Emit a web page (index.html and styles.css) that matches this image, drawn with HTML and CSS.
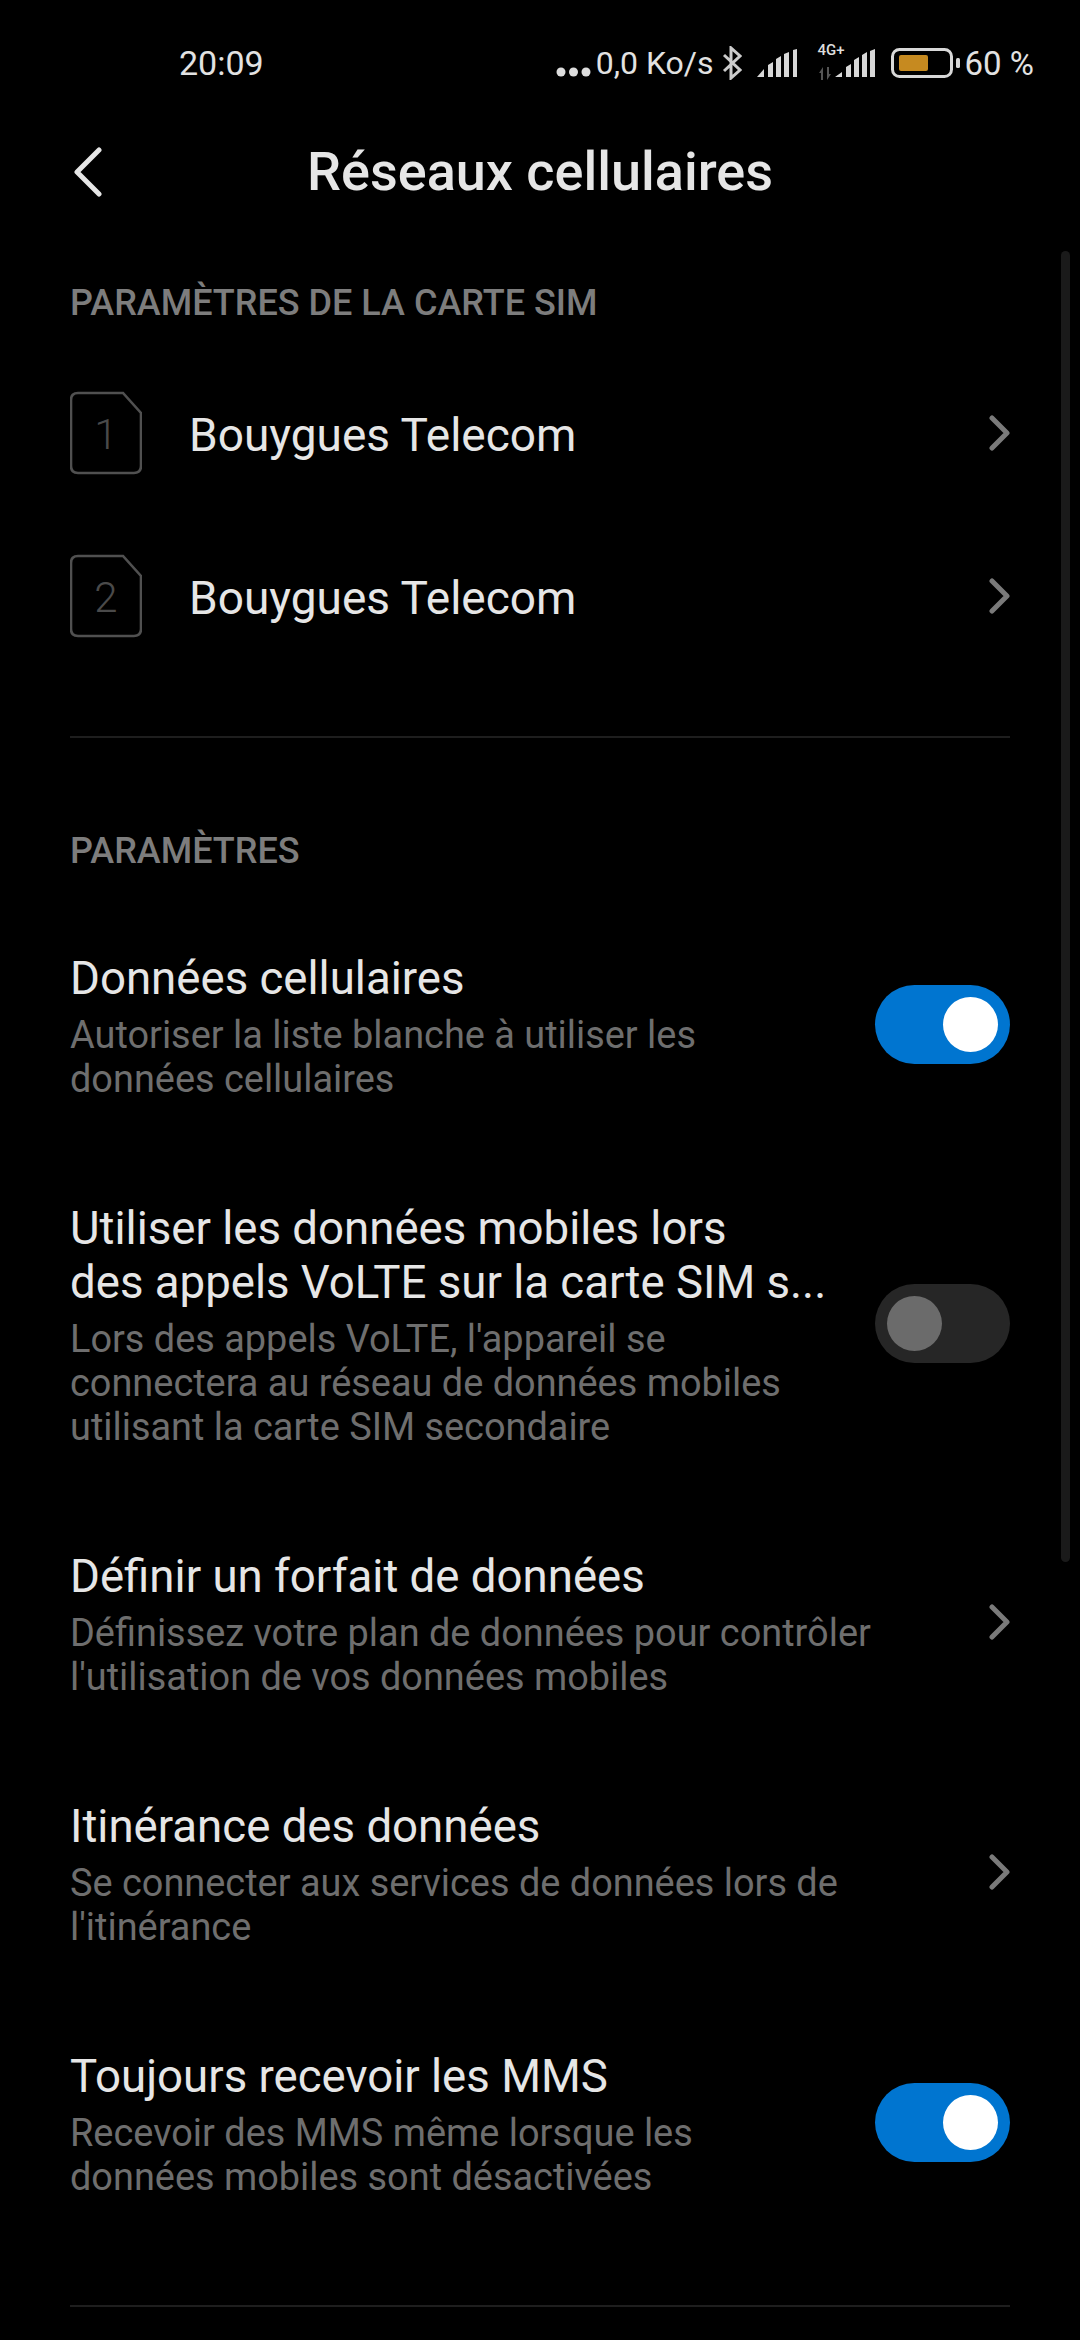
FILE: index.html
```html
<!doctype html>
<html lang="fr">
<head>
	<meta charset="UTF-8">
	<title>Réseaux cellulaires</title>
	<link rel="stylesheet" href="styles.css">
</head>
<body>
<div class="screen">
	<div class="status">
		<span class="time">20:09</span>
		<div class="status_right">
			<svg class="dots" width="35" height="10" viewBox="0 0 35 10"><circle cx="5" cy="5" r="4.5"/><circle cx="17.5" cy="5" r="4.5"/><circle cx="30" cy="5" r="4.5"/></svg>
			<span class="speed">0,0 Ko/s</span>
			<svg class="bt" width="20" height="34" viewBox="0 0 20 34"><path d="M2 9 L18 24 L9 32 L9 2 L18 10 L2 25" fill="none" stroke="#ccc" stroke-width="3"/></svg>
			<svg class="sig" width="40" height="29" viewBox="0 0 40 29"><path d="M0 28 L7 20 V28 Z M11 28 V16 L16 13 V28 Z M19 28 V10 L24 7 V28 Z M27 28 V5 L32 3 V28 Z M36 28 V1 L40 0 V28 Z" fill="#d8d8d8"/></svg>
			<div class="lte">
				<span class="lte_txt">4G+</span>
				<svg class="arrows" width="14" height="13" viewBox="0 0 14 13"><path d="M1 6 L5 0 V13 H3 V6 Z M9 0 H11 V7 H13 L9 13 Z" fill="#555"/></svg>
			</div>
			<svg class="sig2" width="40" height="29" viewBox="0 0 40 29"><path d="M0 28 L7 23 V28 Z M11 28 V18 L16 15 V28 Z M19 28 V11 L24 8 V28 Z M27 28 V6 L32 3 V28 Z M35 28 V2 L40 0 V28 Z" fill="#d8d8d8"/></svg>
			<svg class="batt" width="69" height="30" viewBox="0 0 69 30">
				<rect x="1.5" y="1.5" width="59" height="27" rx="7" fill="none" stroke="#d8d8d8" stroke-width="3"/>
				<rect x="8" y="7" width="29" height="16" rx="2" fill="#c68a20"/>
				<rect x="65" y="10" width="4" height="10" rx="1.5" fill="#d8d8d8"/>
			</svg>
			<span class="pct">60 %</span>
		</div>
	</div>

	<div class="head">
		<svg class="back" width="30" height="50" viewBox="0 0 30 50"><path d="M26 3 L4 25 L26 47" fill="none" stroke="#e6e6e6" stroke-width="5" stroke-linecap="round" stroke-linejoin="round"/></svg>
		<h1>Réseaux cellulaires</h1>
	</div>

	<h2 class="sec sec_first">PARAMÈTRES DE LA CARTE SIM</h2>
	<div class="sims">
		<div class="sim_row">
			<svg class="sim" width="72" height="84" viewBox="0 0 72 84"><path d="M8 2 H53 L71 22 V75 Q71 82 64 82 H8 Q1 82 1 75 V9 Q1 2 8 2 Z" fill="none" stroke="#505050" stroke-width="2.6"/><text x="36" y="58" text-anchor="middle" class="sim_num">1</text></svg>
			<span class="sim_name">Bouygues Telecom</span>
			<svg class="chev" width="22" height="36" viewBox="0 0 22 36"><path d="M4 3 L19 18 L4 33" fill="none" stroke="#7a7a7a" stroke-width="5" stroke-linecap="round" stroke-linejoin="round"/></svg>
		</div>
		<div class="sim_row">
			<svg class="sim" width="72" height="84" viewBox="0 0 72 84"><path d="M8 2 H53 L71 22 V75 Q71 82 64 82 H8 Q1 82 1 75 V9 Q1 2 8 2 Z" fill="none" stroke="#505050" stroke-width="2.6"/><text x="36" y="58" text-anchor="middle" class="sim_num">2</text></svg>
			<span class="sim_name">Bouygues Telecom</span>
			<svg class="chev" width="22" height="36" viewBox="0 0 22 36"><path d="M4 3 L19 18 L4 33" fill="none" stroke="#7a7a7a" stroke-width="5" stroke-linecap="round" stroke-linejoin="round"/></svg>
		</div>
	</div>

	<div class="line line_one"></div>

	<h2 class="sec sec_two">PARAMÈTRES</h2>

	<div class="list">
		<div class="item">
			<div class="txt">
				<div class="tt">Données cellulaires</div>
				<div class="sub">Autoriser la liste blanche à utiliser les<br>données cellulaires</div>
			</div>
			<div class="sw on"><i></i></div>
		</div>
		<div class="item">
			<div class="txt">
				<div class="tt">Utiliser les données mobiles lors<br>des appels VoLTE sur la carte SIM s...</div>
				<div class="sub">Lors des appels VoLTE, l'appareil se<br>connectera au réseau de données mobiles<br>utilisant la carte SIM secondaire</div>
			</div>
			<div class="sw"><i></i></div>
		</div>
		<div class="item">
			<div class="txt">
				<div class="tt">Définir un forfait de données</div>
				<div class="sub">Définissez votre plan de données pour contrôler<br>l'utilisation de vos données mobiles</div>
			</div>
			<svg class="chev" width="22" height="36" viewBox="0 0 22 36"><path d="M4 3 L19 18 L4 33" fill="none" stroke="#7a7a7a" stroke-width="5" stroke-linecap="round" stroke-linejoin="round"/></svg>
		</div>
		<div class="item">
			<div class="txt">
				<div class="tt">Itinérance des données</div>
				<div class="sub">Se connecter aux services de données lors de<br>l'itinérance</div>
			</div>
			<svg class="chev" width="22" height="36" viewBox="0 0 22 36"><path d="M4 3 L19 18 L4 33" fill="none" stroke="#7a7a7a" stroke-width="5" stroke-linecap="round" stroke-linejoin="round"/></svg>
		</div>
		<div class="item">
			<div class="txt">
				<div class="tt">Toujours recevoir les MMS</div>
				<div class="sub">Recevoir des MMS même lorsque les<br>données mobiles sont désactivées</div>
			</div>
			<div class="sw on"><i></i></div>
		</div>
	</div>

	<div class="line line_two"></div>

	<div class="scroll"></div>
</div>
</body>
</html>
```

FILE: styles.css
```css
html,body{margin:0;padding:0;background:#000;}
.screen{position:relative;
	width:1080px;
	height:2340px;
	overflow:hidden;
	background:#000;
	font-family:Roboto,"Noto Sans",sans-serif;
	color:#e6e6e6;}

/* status bar */
.status{display:flex;
	align-items:center;
	justify-content:space-between;
	height:36px;
	padding:45px 46px 0 179px;
	font-size:33px;
	color:#e2e2e2;}
.time{font-size:34px;line-height:36px;}
.status_right{display:flex;align-items:center;}
.dots{fill:#ddd;margin-top:18px;}
.speed{margin-left:5px;font-size:32px;}
.bt{margin-left:8px;}
.sig{margin-left:15px;}
.lte{position:relative;width:17px;height:36px;margin-left:21px;}
.lte_txt{position:absolute;left:0;top:-4px;font-size:15px;font-weight:500;color:#ddd;white-space:nowrap;}
.arrows{position:absolute;left:0;top:22px;}
.batt{margin-left:16px;}
.pct{margin-left:5px;}

/* title */
.head{position:relative;
	display:flex;
	align-items:center;
	justify-content:center;
	height:72px;
	margin-top:55px;}
.head h1{margin:0;font-size:54px;font-weight:500;line-height:72px;color:#e6e6e6;white-space:nowrap;}
.back{position:absolute;left:73px;top:11px;}

.sec{margin:0 70px;
	font-size:36px;
	line-height:40px;
	font-weight:500;
	color:#7d7d7d;}
.sec_first{margin-top:75px;}
.sec_two{margin-top:93px;}

.sims{margin-top:28px;}
.sim_row{display:flex;align-items:center;height:163px;padding:0 70px;}
.sim{flex:none;}
.sim_num{font-family:Roboto,sans-serif;font-size:42px;font-weight:300;fill:#4a4a4a;}
.sim_name{flex:1;margin-left:47px;padding-top:4px;font-size:46px;color:#e6e6e6;}
.chev{flex:none;}

.line{height:2px;margin:0 70px;background:#1e1e1e;}
.line_one{margin-top:59px;}
.line_two{margin-top:108px;}

.list{display:flex;flex-direction:column;gap:100px;margin-top:78px;padding:0 70px;}
.item{display:flex;align-items:center;justify-content:space-between;}
.txt{flex:1;min-width:0;padding-top:3px;margin-bottom:-2px;}
.tt{font-size:45.6px;line-height:54px;color:#e6e6e6;white-space:nowrap;}
.sub{margin-top:7px;font-size:37.9px;line-height:44px;color:#6e6e6e;white-space:nowrap;}

.sw{position:relative;flex:none;width:135px;height:79px;border-radius:40px;background:#262626;}
.sw i{position:absolute;left:12px;top:12px;width:55px;height:55px;border-radius:50%;background:#6b6b6b;}
.sw.on{background:#0075d0;}
.sw.on i{left:auto;right:12px;background:#fff;}

.scroll{position:absolute;left:1061px;top:251px;width:9px;height:1311px;border-radius:5px;background:#1a1a1a;}
```
